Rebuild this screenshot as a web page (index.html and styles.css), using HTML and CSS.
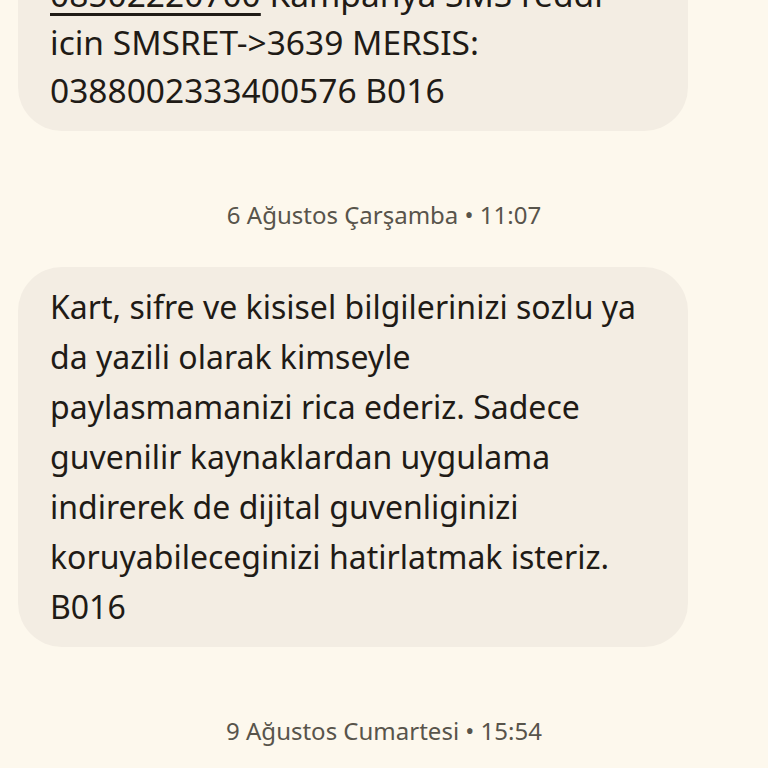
FILE: index.html
```html
<!DOCTYPE html>
<html lang="tr">
<head>
<meta charset="utf-8">
<link rel="stylesheet" href="styles.css">
</head>
<body>
<div class="thread">
  <div class="bubble first">
    <p><span class="num">08502220700</span> Kampanya SMS reddi<br>icin SMSRET-&gt;3639 MERSIS:<br>0388002333400576 B016</p>
  </div>
  <div class="stamp">6 Ağustos Çarşamba • 11:07</div>
  <div class="bubble">
    <p>Kart, sifre ve kisisel bilgilerinizi sozlu ya<br>da yazili olarak kimseyle<br>paylasmamanizi rica ederiz. Sadece<br>guvenilir kaynaklardan uygulama<br>indirerek de dijital guvenliginizi<br>koruyabileceginizi hatirlatmak isteriz.<br>B016</p>
  </div>
  <div class="stamp">9 Ağustos Cumartesi • 15:54</div>
</div>
</body>
</html>
```
FILE: styles.css
```css
html, body {
  margin: 0;
  padding: 0;
  background: #fdf8ed;
  overflow: hidden;
  height: 768px;
}
.thread {
  display: flex;
  flex-direction: column;
  padding: 0 80px 0 18px;
}
.bubble {
  background: #f3ede3;
  border-radius: 44px;
  padding: 15px 20px 15px 32px;
  font-family: "Noto Sans", Roboto, sans-serif;
  font-size: 32px;
  line-height: 50px;
  color: #1f1b16;
  white-space: nowrap;
}
.bubble p { margin: 0; }
.bubble.first {
  margin-top: -45px;
  padding-bottom: 17px;
  font-size: 33.5px;
  line-height: 48px;
}
.num {
  text-decoration: underline;
  text-underline-offset: 6px;
  text-decoration-thickness: 3px;
}
.stamp {
  font-family: "Noto Sans", Roboto, sans-serif;
  font-size: 24px;
  line-height: 30px;
  color: #58544b;
  text-align: center;
  margin: 69px 0 37px 62px;
}
```
